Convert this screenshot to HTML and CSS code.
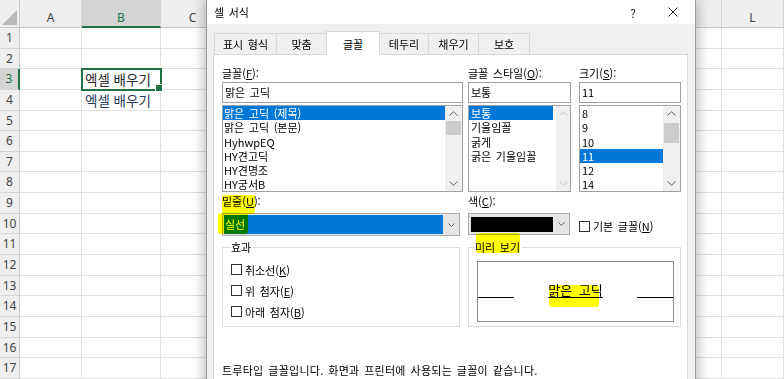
FILE: index.html
```html
<!DOCTYPE html>
<html lang="ko">
<head>
    <meta charset="UTF-8">
    <title>셀 서식</title>
    <link rel="stylesheet" href="styles.css">
</head>
<body>
    <div class="sheet" id="sheet"></div>

    <div class="dialog">
        <div class="titlebar">
            <span class="title">셀 서식</span>
            <span class="help">?</span>
            <svg class="close" width="10" height="10" viewBox="0 0 10 10"><path d="M0.5 0.5L9.5 9.5M9.5 0.5L0.5 9.5" stroke="#222" stroke-width="1"/></svg>
        </div>

        <div class="dialog-body">
            <div class="tabs">
                <div class="tab">표시 형식</div>
                <div class="tab">맞춤</div>
                <div class="tab active">글꼴</div>
                <div class="tab">테두리</div>
                <div class="tab">채우기</div>
                <div class="tab">보호</div>
            </div>

            <div class="panel">
                <div class="panel-grid">
                    <!-- 글꼴 -->
                    <div class="field">
                        <div class="label">글꼴(<u>F</u>):</div>
                        <div class="textbox">맑은 고딕</div>
                        <div class="listbox">
                            <ul class="list-font">
                                <li class="selected">맑은 고딕 (제목)</li>
                                <li>맑은 고딕 (본문)</li>
                                <li>HyhwpEQ</li>
                                <li>HY견고딕</li>
                                <li>HY견명조</li>
                                <li>HY궁서B</li>
                            </ul>
                            <div class="scrollbar">
                                <span class="sb-arrow"><svg width="9" height="5" viewBox="0 0 9 5"><polyline points="0.5,4.5 4.5,0.8 8.5,4.5" fill="none" stroke="#606060"/></svg></span>
                                <span class="thumb"></span>
                                <span class="track"></span>
                                <span class="sb-arrow"><svg width="9" height="5" viewBox="0 0 9 5"><polyline points="0.5,0.5 4.5,4.2 8.5,0.5" fill="none" stroke="#606060"/></svg></span>
                            </div>
                        </div>
                    </div>

                    <!-- 글꼴 스타일 -->
                    <div class="field">
                        <div class="label">글꼴 스타일(<u>O</u>):</div>
                        <div class="textbox textbox-style">보통</div>
                        <div class="listbox listbox-style">
                            <ul class="list-style">
                                <li class="selected">보통</li>
                                <li>기울임꼴</li>
                                <li>굵게</li>
                                <li>굵은 기울임꼴</li>
                            </ul>
                            <div class="scrollbar scrollbar-off">
                                <span class="sb-arrow"><svg width="9" height="5" viewBox="0 0 9 5"><polyline points="0.5,4.5 4.5,0.8 8.5,4.5" fill="none" stroke="#c4c4c4"/></svg></span>
                                <span class="track"></span>
                                <span class="sb-arrow"><svg width="9" height="5" viewBox="0 0 9 5"><polyline points="0.5,0.5 4.5,4.2 8.5,0.5" fill="none" stroke="#c4c4c4"/></svg></span>
                            </div>
                        </div>
                    </div>

                    <!-- 크기 -->
                    <div class="field">
                        <div class="label">크기(<u>S</u>):</div>
                        <div class="textbox textbox-size">11</div>
                        <div class="listbox listbox-size">
                            <ul class="list-size">
                                <li>8</li>
                                <li>9</li>
                                <li>10</li>
                                <li class="selected">11</li>
                                <li>12</li>
                                <li>14</li>
                            </ul>
                            <div class="scrollbar">
                                <span class="sb-arrow"><svg width="9" height="5" viewBox="0 0 9 5"><polyline points="0.5,4.5 4.5,0.8 8.5,4.5" fill="none" stroke="#606060"/></svg></span>
                                <span class="thumb thumb-size"></span>
                                <span class="track"></span>
                                <span class="sb-arrow"><svg width="9" height="5" viewBox="0 0 9 5"><polyline points="0.5,0.5 4.5,4.2 8.5,0.5" fill="none" stroke="#606060"/></svg></span>
                            </div>
                        </div>
                    </div>

                    <!-- 밑줄 / 색 -->
                    <div class="field row2">
                        <div class="label">밑줄(<u>U</u>):</div>
                        <div class="combo combo-underline">
                            <div class="combo-value">실선</div>
                            <div class="combo-btn"><svg width="7" height="4" viewBox="0 0 7 4"><polyline points="0.5,0.5 3.5,3.5 6.5,0.5" fill="none" stroke="#606060"/></svg></div>
                        </div>
                    </div>
                    <div class="field row2">
                        <div class="label">색(<u>C</u>):</div>
                        <div class="combo combo-color">
                            <div class="swatch"></div>
                            <div class="combo-btn"><svg width="7" height="4" viewBox="0 0 7 4"><polyline points="0.5,0.5 3.5,3.5 6.5,0.5" fill="none" stroke="#606060"/></svg></div>
                        </div>
                    </div>
                    <div class="check-row default-font"><span class="check"></span>기본 글꼴(<u>N</u>)</div>

                    <!-- 효과 / 미리 보기 -->
                    <fieldset class="group effects">
                        <legend>효과</legend>
                        <div class="check-row"><span class="check"></span>취소선(<u>K</u>)</div>
                        <div class="check-row"><span class="check"></span>위 첨자(<u>E</u>)</div>
                        <div class="check-row"><span class="check"></span>아래 첨자(<u>B</u>)</div>
                    </fieldset>
                    <fieldset class="group preview">
                        <legend>미리 보기</legend>
                        <div class="preview-box">
                            <span class="preview-line"></span>
                            <span class="sample">맑은 고딕</span>
                            <span class="preview-line"></span>
                        </div>
                    </fieldset>
                </div>

                <p class="note">트루타입 글꼴입니다. 화면과 프린터에 사용되는 글꼴이 같습니다.</p>
            </div>
        </div>

        <!-- 형광펜 표시 -->
        <span class="marker marker-label"></span>
        <span class="marker marker-value"></span>
        <span class="marker marker-preview"></span>
        <span class="marker marker-sample"></span>
    </div>

    <script>
        const sheet = document.getElementById('sheet');
        const cols = ['A', 'B', 'C', 'D', 'E', 'F', 'G', 'H', 'I', 'J', 'K', 'L'];
        const values = { B3: '엑셀 배우기', B4: '엑셀 배우기' };

        function add(cls, text) {
            const d = document.createElement('div');
            d.className = cls;
            if (text) d.textContent = text;
            sheet.appendChild(d);
        }

        // 머리글
        add('corner');
        cols.forEach(c => add(c === 'B' ? 'col-head active' : 'col-head', c));

        // 행
        for (let r = 1; r <= 17; r++) {
            add(r === 3 ? 'row-head active' : 'row-head', String(r));
            cols.forEach(c => {
                const key = c + r;
                let cls = 'cell';
                if (key === 'B3') cls += ' selected';
                if (key === 'B4') cls += ' navy';
                add(cls, values[key]);
            });
        }
    </script>
</body>
</html>
```

FILE: styles.css
```css
* {
    box-sizing: border-box;
}

html, body {
    margin: 0;
    height: 100%;
    overflow: hidden;
}

body {
    position: relative;
    background: #fff;
    font-family: "Noto Sans CJK KR", sans-serif;
}

/* 시트 */
.sheet {
    display: grid;
    grid-template-columns: 20px 62px 79px 64px repeat(8, 62.125px) 62px;
    grid-template-rows: 28px;
    grid-auto-rows: 20.65px;
}

.corner {
    position: relative;
    background: #efefef;
    border-right: 1px solid #c6c6c6;
    border-bottom: 1px solid #c6c6c6;
}

.corner::after {
    content: "";
    position: absolute;
    right: 2px;
    bottom: 2px;
    border-style: solid;
    border-width: 0 0 15px 15px;
    border-color: transparent transparent #b9b9b9 transparent;
}

.col-head {
    background: #efefef;
    border-right: 1px solid #d6d6d6;
    border-bottom: 1px solid #c6c6c6;
    padding-top: 8px;
    text-align: center;
    font-family: "Noto Sans", sans-serif;
    font-size: 12px;
    line-height: 19px;
    color: #444;
}

.col-head.active {
    background: #d4d4d4;
    color: #217346;
    border-bottom: 2px solid #217346;
}

.row-head {
    background: #efefef;
    border-right: 1px solid #c6c6c6;
    border-bottom: 1px solid #d6d6d6;
    text-align: center;
    font-family: "Noto Sans", sans-serif;
    font-size: 12px;
    line-height: 20px;
    color: #444;
}

.row-head.active {
    background: #d4d4d4;
    color: #217346;
    border-right: 2px solid #217346;
}

.cell {
    border-right: 1px solid #e1e1e1;
    border-bottom: 1px solid #e1e1e1;
    padding-left: 3px;
    font-size: 13.5px;
    line-height: 20px;
    white-space: nowrap;
    color: #262626;
    overflow: hidden;
}

.cell.navy {
    color: #263a5e;
}

.cell.selected {
    position: relative;
    z-index: 1;
    overflow: visible;
    outline: 2px solid #217346;
    outline-offset: -1px;
}

.cell.selected::after {
    content: "";
    position: absolute;
    right: -3px;
    bottom: -3px;
    width: 6px;
    height: 6px;
    background: #217346;
    border: 1px solid #fff;
}

/* 대화 상자 */
.dialog {
    position: absolute;
    left: 206px;
    top: -1px;
    z-index: 2;
    width: 490px;
    height: 420px;
    background: #f0f0f0;
    border: 1px solid #9a9a9a;
    box-shadow: 0 0 14px rgba(0, 0, 0, 0.35);
    font-size: 11px;
    word-spacing: 1.5px;
    color: #000;
}

.titlebar {
    display: flex;
    align-items: center;
    height: 24px;
    padding-left: 7px;
    background: #fff;
}

.help {
    margin-left: auto;
    margin-right: 32px;
    font-size: 12px;
    color: #222;
}

.close {
    margin-right: 17px;
}

.dialog-body {
    padding: 7px 7px 0 6px;
}

.tabs {
    display: flex;
    align-items: flex-end;
    height: 24px;
    margin: 0 0 -1px 1px;
}

.tab {
    height: 21px;
    margin-bottom: 1px;
    border: 1px solid #d9d9d9;
    border-right: 0;
    border-bottom: 0;
    background: #f0f0f0;
    text-align: center;
    line-height: 21px;
}

.tab:nth-child(1) { width: 62px; }
.tab:nth-child(2) { width: 50px; }
.tab:nth-child(3) { width: 54px; }
.tab:nth-child(4) { width: 48px; }
.tab:nth-child(5) { width: 50px; }
.tab:nth-child(6) { width: 52px; border-right: 1px solid #d9d9d9; }

.tab.active {
    position: relative;
    z-index: 1;
    height: 24px;
    margin-bottom: 0;
    background: #fff;
    border-right: 1px solid #d9d9d9;
    line-height: 25px;
}

.tab.active + .tab {
    border-left: 0;
}

.panel {
    height: 340px;
    padding: 11px 5px 0 8px;
    background: #fff;
    border: 1px solid #d9d9d9;
}

.panel-grid {
    display: grid;
    grid-template-columns: 246px 111px 102px;
}

.label {
    height: 16px;
    line-height: 14px;
    white-space: nowrap;
}

.textbox {
    width: 241px;
    height: 21px;
    border: 1px solid #a0a0a0;
    padding-left: 2px;
    line-height: 19px;
}

.textbox-style { width: 103px; }
.textbox-size { width: 102px; }

.listbox {
    display: flex;
    width: 241px;
    height: 87px;
    margin-top: 2px;
    border: 1px solid #a0a0a0;
}

.listbox-style { width: 103px; }
.listbox-size { width: 102px; }

.listbox ul {
    flex: 1;
    margin: 0;
    padding: 0;
    list-style: none;
}

.listbox li {
    height: 14.3px;
    padding-left: 1px;
    line-height: 14.3px;
    white-space: nowrap;
}

.list-style li,
.list-size li {
    padding-left: 2px;
}

.list-style {
    margin-right: 3px !important;
}

.listbox li.selected {
    background: #0078d7;
    color: #fff;
}

.scrollbar {
    display: flex;
    flex-direction: column;
    width: 17px;
    background: #f0f0f0;
}

.scrollbar-off {
    width: 14px;
}

.sb-arrow {
    display: flex;
    align-items: center;
    justify-content: center;
    height: 15px;
}

.thumb {
    height: 14px;
    margin: 0 1px;
    background: #cdcdcd;
}

.thumb-size {
    height: 20px;
    margin-top: 2px;
}

.track {
    flex: 1;
}

.row2 .label {
    margin-top: 2px;
}

.combo {
    display: flex;
    height: 23px;
    margin-top: 3px;
    border: 1px solid #adadad;
    background: #e5e5e5;
}

.combo-underline { width: 238px; }

.combo-color {
    width: 102px;
    height: 22px;
}

.combo-value {
    flex: 1;
    margin: 1px 0 1px 1px;
    padding-left: 1px;
    background: #0078d7;
    color: #fff;
    line-height: 19px;
}

.swatch {
    flex: 1;
    margin: 3px 0 2px 2px;
    background: #000;
}

.combo-btn {
    display: flex;
    align-items: center;
    justify-content: center;
    width: 16px;
}

.check-row {
    display: flex;
    align-items: center;
    height: 21px;
    white-space: nowrap;
}

.check {
    width: 11px;
    height: 11px;
    margin-right: 3px;
    border: 1px solid #333;
    background: #fff;
}

.default-font {
    align-self: end;
    height: 23px;
    padding-top: 3px;
}

/* 그룹 상자 */
.group {
    height: 88px;
    min-width: 0;
    margin: 3px 0 0;
    padding: 0;
    border: 1px solid #dcdcdc;
}

.group legend {
    padding: 0 2px 0 0;
    line-height: 16px;
}

.effects {
    width: 238px;
    padding: 4px 0 0 8px;
}

.preview {
    grid-column: 2 / 4;
}

.preview legend {
    margin-left: 6px;
}

.preview-box {
    display: flex;
    width: 197px;
    height: 61px;
    margin: 6px 0 0 8px;
    border: 1px solid #8c8c8c;
}

.preview-line {
    width: 36px;
    height: 36px;
    border-bottom: 1px solid #000;
}

.sample {
    flex: 1;
    padding-top: 20px;
    text-align: center;
    font-size: 13px;
    line-height: 16px;
    word-spacing: 3px;
    text-decoration: underline;
    text-underline-offset: 2px;
}

.note {
    margin: 35px 0 0;
    line-height: 16px;
    letter-spacing: 0.25px;
}

/* 형광펜 */
.marker {
    position: absolute;
    background: #ffff00;
    mix-blend-mode: multiply;
    border-radius: 3px;
}

.marker-label { left: 15px; top: 195px; width: 33px; height: 19px; }
.marker-value { left: 11px; top: 213px; width: 30px; height: 21px; }
.marker-preview { left: 269px; top: 233px; width: 44px; height: 20px; }
.marker-sample { left: 342px; top: 285px; width: 50px; height: 22px; }
```
